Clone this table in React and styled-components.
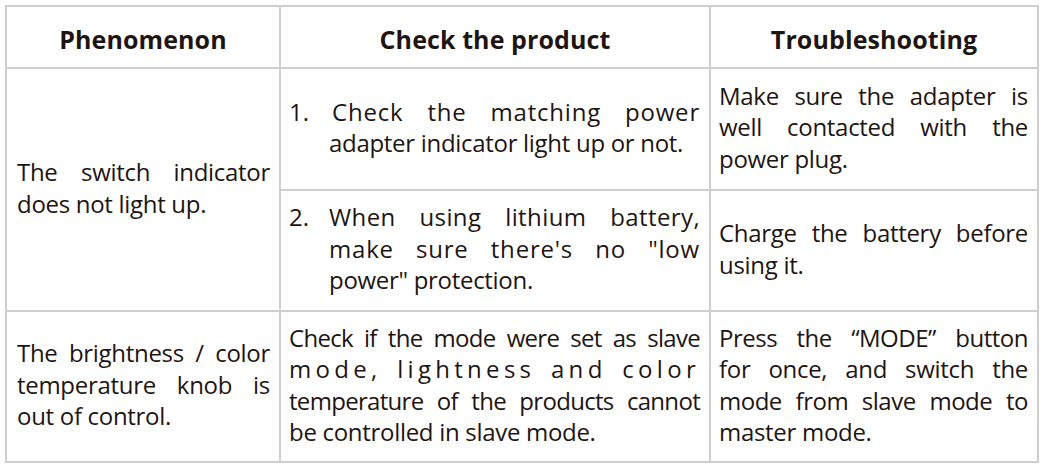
import React from "react";
import styled, { createGlobalStyle } from "styled-components";

const Global = createGlobalStyle`
  html, body { margin: 0; padding: 0; background: #ffffff; }
  body { font-family: "Open Sans", "Noto Sans", sans-serif; color: #1e1512; }
`;

const Page = styled.div`
  padding: 5px;
`;

const Table = styled.table`
  border-collapse: collapse;
  table-layout: fixed;
  width: 1032px;
  font-family: "Open Sans", "Noto Sans", sans-serif;
  font-size: 24px;
  color: #1e1512;
`;

const HeadCell = styled.th`
  border: 2px solid #cfcfcf;
  height: 62px;
  padding: 3px 8px 0;
  font-weight: 700;
  font-size: 25px;
  letter-spacing: 0.1px;
  text-align: center;
  vertical-align: middle;
  box-sizing: border-box;
`;

const Cell = styled.td`
  border: 2px solid #cfcfcf;
  height: ${(p) => p.$h}px;
  padding: 0 9px 4px ${(p) => p.$pl}px;
  vertical-align: middle;
  box-sizing: border-box;
`;

const Line = styled.div`
  line-height: 31.5px;
  white-space: nowrap;
  letter-spacing: ${(p) => (p.$spread ? "4.3px" : p.$ls != null ? `${p.$ls}px` : "-0.3px")};
  text-align: ${(p) => (p.$last ? "left" : "justify")};
  text-align-last: ${(p) => (p.$last ? "left" : "justify")};
`;

const Item = styled.div`
  display: flex;
`;

const Num = styled.div`
  flex: 0 0 40px;
  line-height: 31.5px;
`;

const ItemBody = styled.div`
  flex: 1;
  min-width: 0;
`;

function Lines({ lines, spread, tight }) {
  return lines.map((l, i) => (
    <Line
      key={i}
      $last={i === lines.length - 1}
      $spread={spread === i}
      $ls={tight && tight[i] != null ? tight[i] : null}
    >
      {l}
    </Line>
  ));
}

export default function App() {
  return (
    <Page>
      <Global />
      <Table>
        <colgroup>
          <col style={{ width: 274 }} />
          <col style={{ width: 430 }} />
          <col style={{ width: 328 }} />
        </colgroup>
        <thead>
          <tr>
            <HeadCell>Phenomenon</HeadCell>
            <HeadCell>Check the product</HeadCell>
            <HeadCell>Troubleshooting</HeadCell>
          </tr>
        </thead>
        <tbody>
          <tr>
            <Cell rowSpan={2} $h={122} $pl={10}>
              <Lines lines={["The switch indicator", "does not light up."]} />
            </Cell>
            <Cell $h={122} $pl={8}>
              <Item>
                <Num>1.</Num>
                <ItemBody>
                  <Line $ls={0.8} style={{ marginLeft: 3 }}>Check the matching power</Line>
                  <Line $last>adapter indicator light up or not.</Line>
                </ItemBody>
              </Item>
            </Cell>
            <Cell $h={122} $pl={8}>
              <Lines lines={["Make sure the adapter is", "well contacted with the", "power plug."]} />
            </Cell>
          </tr>
          <tr>
            <Cell $h={121} $pl={8}>
              <Item>
                <Num>2.</Num>
                <ItemBody>
                  <Lines
                    tight={[0.4, 0.8]}
                    lines={["When using lithium battery,", "make sure there's no \"low", "power\" protection."]}
                  />
                </ItemBody>
              </Item>
            </Cell>
            <Cell $h={121} $pl={8}>
              <Lines lines={["Charge the battery before", "using it."]} />
            </Cell>
          </tr>
          <tr>
            <Cell $h={151} $pl={10}>
              <Lines lines={["The brightness / color", "temperature knob is", "out of control."]} />
            </Cell>
            <Cell $h={151} $pl={8}>
              <Lines
                spread={1}
                tight={[-0.7, null, -0.7]}
                lines={[
                  "Check if the mode were set as slave",
                  "mode, lightness and color",
                  "temperature of the products cannot",
                  "be controlled in slave mode.",
                ]}
              />
            </Cell>
            <Cell $h={151} $pl={8}>
              <Lines
                tight={[-0.5, -0.3, -0.5]}
                lines={[
                  "Press the \u201CMODE\u201D button",
                  "for once, and switch the",
                  "mode from slave mode to",
                  "master mode.",
                ]}
              />
            </Cell>
          </tr>
        </tbody>
      </Table>
    </Page>
  );
}
